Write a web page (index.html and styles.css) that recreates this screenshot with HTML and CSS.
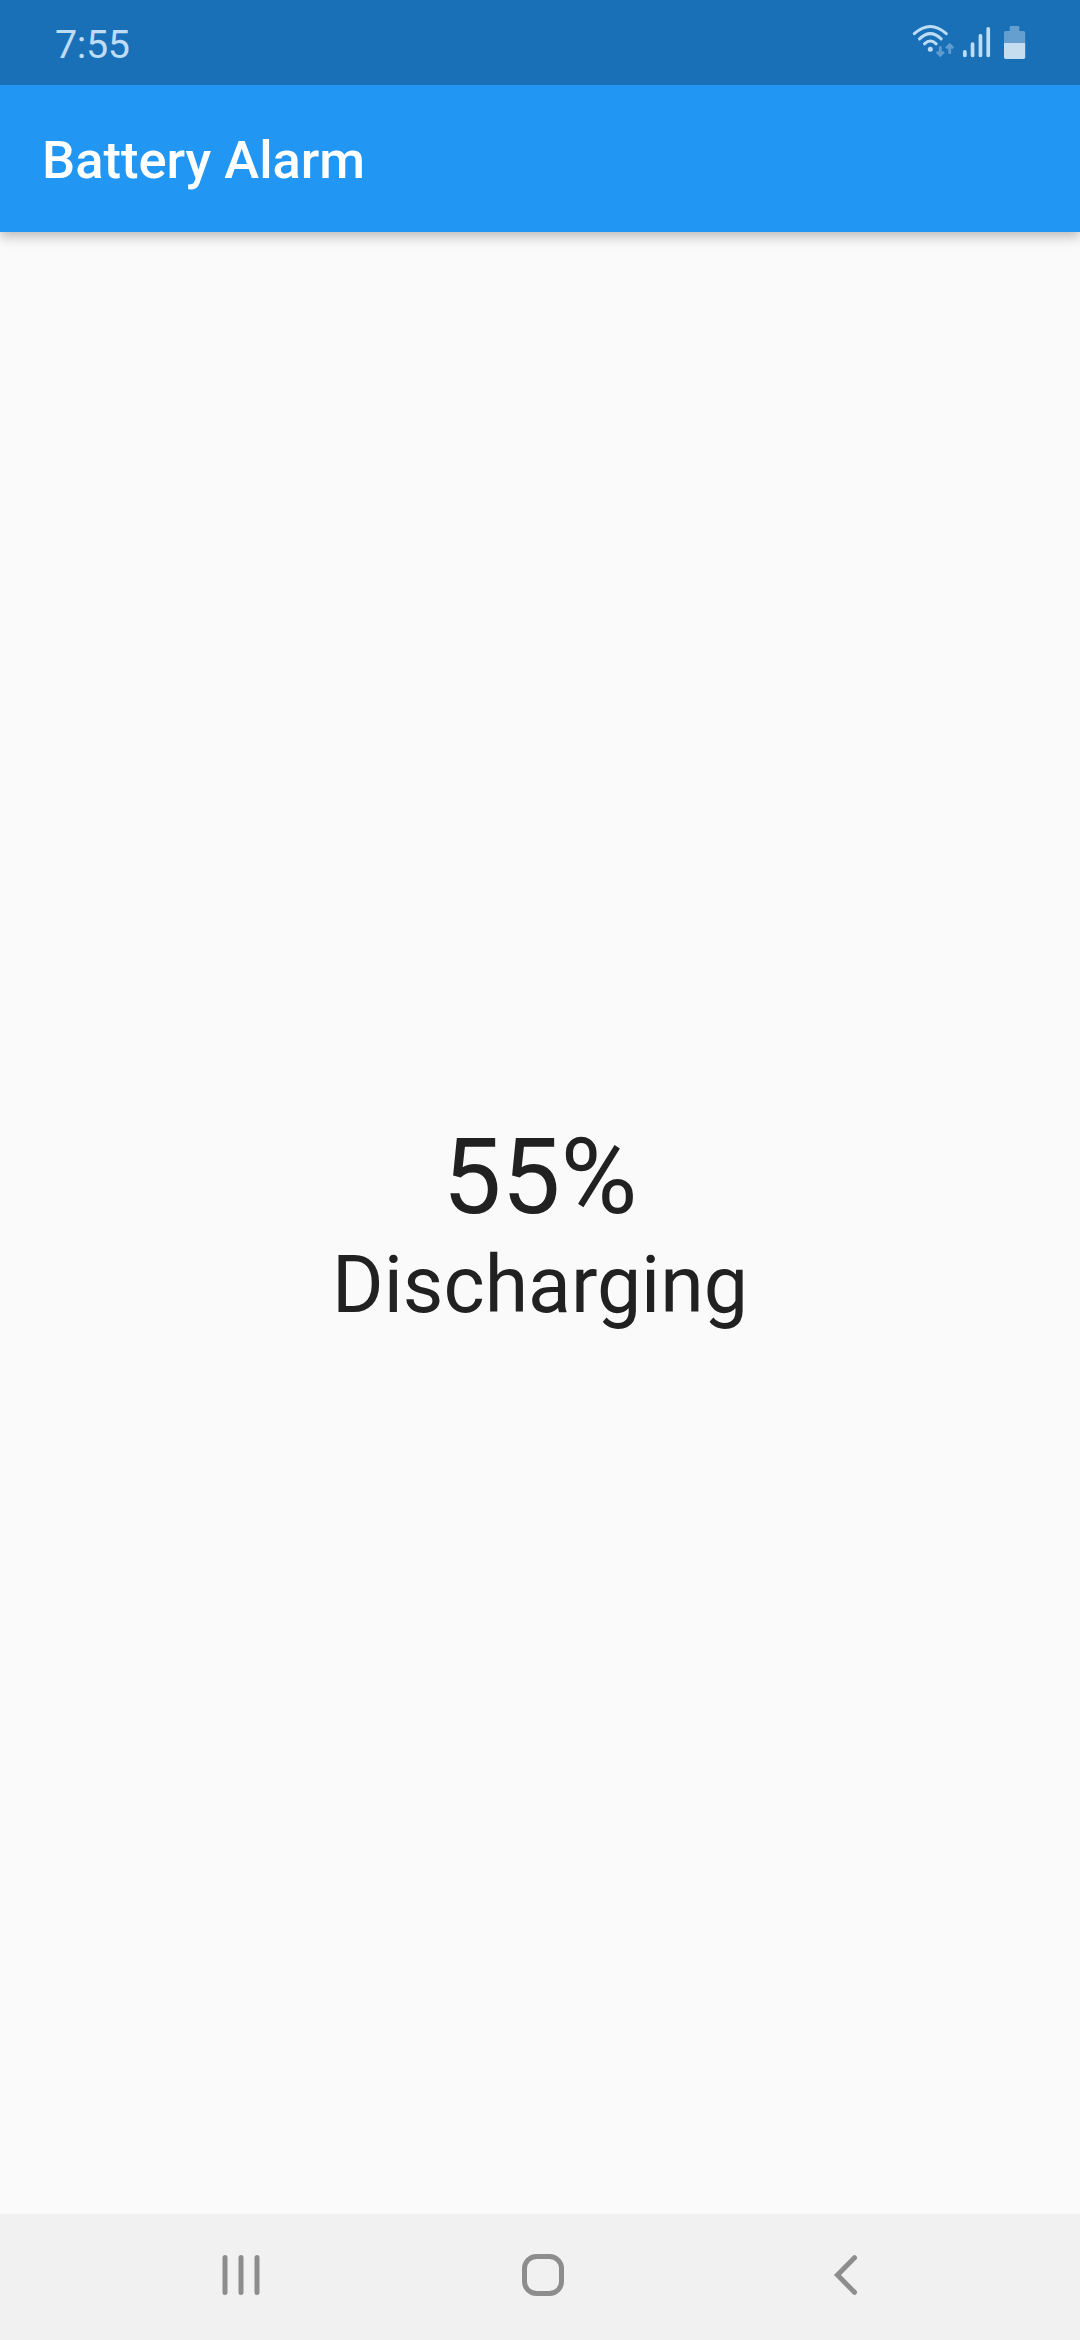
FILE: index.html
```html
<!DOCTYPE html>
<html lang="en">
<head>
<meta charset="utf-8">
<title>Battery Alarm</title>
<link rel="stylesheet" href="styles.css">
</head>
<body>
<div class="status">
  <span class="clock">7:55</span>
  <svg class="status-icons" width="140" height="60" viewBox="0 0 140 60" fill="none">
    <path d="M14.300 23.700Q30.300 9.300 46.300 23.700M19.500 28.900Q30.300 18.500 41.200 28.900M24.500 33.800Q30.300 28.200 36.200 33.800" stroke="#bddcf5" stroke-width="3" stroke-linecap="round"/>
    <circle cx="30.300" cy="39.300" r="2.500" fill="#bddcf5"/>
    <g fill="#bddcf5">
      <rect x="63" y="40" width="3.700" height="7.300" rx="1.700"/>
      <rect x="70.700" y="32.300" width="3.700" height="15" rx="1.700"/>
      <rect x="78.600" y="24" width="3.700" height="23.300" rx="1.700"/>
      <rect x="86.400" y="17" width="3.700" height="30.300" rx="1.700"/>
    </g>
    <path d="M40.300 36.300V45M36.800 41.800l3.500 3.500 3.500-3.500M49.700 43.700V35M46.200 38.200l3.500-3.500 3.500 3.500" stroke="#5f9bd0" stroke-width="2.900"/>
    <path d="M111 16h7q1.300 0 1.300 1.300V21h4.200q1.700 0 1.700 1.700V33H104V22.700q0-1.700 1.700-1.700h4V17.300Q109.700 16 111 16z" fill="#659fd0"/>
    <path d="M104 33h21.200v14.300q0 1.700-1.700 1.700h-17.800q-1.700 0-1.700-1.700z" fill="#c6dcef"/>
  </svg>
</div>
<header class="appbar">Battery Alarm</header>
<main class="content">
  <div class="percent">55%</div>
  <div class="state">Discharging</div>
</main>
<nav class="navbar">
  <svg width="60" height="60" viewBox="0 0 60 60"><path d="M15 12.500v35M31 12.500v35M47 12.500v35"/></svg>
  <svg width="60" height="60" viewBox="0 0 60 60"><rect x="11.500" y="11.500" width="37" height="37" rx="12"/></svg>
  <svg width="60" height="60" viewBox="0 0 60 60"><path d="M38.500 12.700L21.500 30L38.500 47.300"/></svg>
</nav>
</body>
</html>
```
FILE: styles.css
```css
body {
  margin: 0;
  height: 2340px;
  display: flex;
  flex-direction: column;
  overflow: hidden;
  background: #fafafa;
  font-family: Roboto, sans-serif;
}
.status {
  box-sizing: border-box;
  height: 85px;
  padding: 10px 40px 0 55px;
  display: flex;
  justify-content: space-between;
  align-items: flex-start;
  background: #1a70b7;
  position: relative;
  z-index: 1;
}
.clock {
  font-size: 39.5px;
  line-height: 70px;
  letter-spacing: -0.4px;
  color: #bddcf5;
}
.appbar {
  box-sizing: border-box;
  height: 147px;
  padding: 2px 0 0 42px;
  line-height: 147px;
  background: #2196f3;
  color: #fff;
  font-size: 52.5px;
  font-weight: 500;
  box-shadow: 0 4px 12px rgba(0, 0, 0, .28);
}
.content {
  flex: 1;
  display: flex;
  flex-direction: column;
  align-items: center;
  justify-content: center;
  color: #212121;
}
.percent {
  font-size: 105px;
  line-height: 123px;
}
.state {
  font-size: 78.75px;
  line-height: 92px;
}
.navbar {
  height: 126px;
  box-sizing: border-box;
  padding: 0 204px 4px 210px;
  display: flex;
  justify-content: space-between;
  align-items: center;
  background: #f1f1f1;
}
.navbar svg {
  fill: none;
  stroke: #8d8d8d;
  stroke-width: 5;
  stroke-linecap: round;
}
```
